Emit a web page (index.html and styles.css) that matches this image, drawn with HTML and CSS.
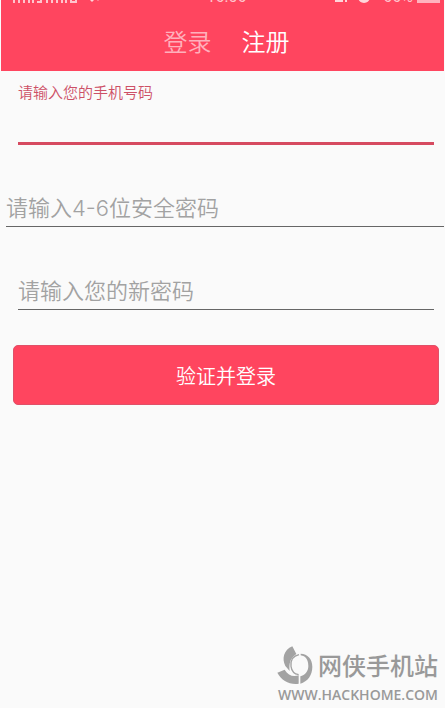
FILE: index.html
```html
<!DOCTYPE html>
<html lang="zh-CN">
<head>
<meta charset="utf-8">
<meta name="viewport" content="width=device-width, initial-scale=1">
<title>注册</title>
<link rel="stylesheet" href="styles.css">
</head>
<body>
<div class="page">
  <header class="header">
    <div class="status">
      <div class="status-side">
        <svg class="signal" width="66" height="12" viewBox="0 0 66 12" aria-hidden="true">
          <path d="M1 9v3M6 7v5M11 5v7M16 3v9M20 1v11M24 11h4M28 5v7M34 9v3M39 7v5M44 5v7M49 3v9M53 1v11M58 5v6h5V5M58 8h5"/>
        </svg>
        <svg class="wifi" width="14" height="12" viewBox="0 0 14 12" aria-hidden="true">
          <path d="M1 7l4 4 3-3zM9 7h4l-2 3z"/>
        </svg>
      </div>
      <span class="status-text">16:06</span>
      <div class="status-side status-end">
        <svg class="indicators" width="38" height="12" viewBox="0 0 38 12" aria-hidden="true">
          <path d="M2 11V8h2V2h6v9zM12 11V4h2v7z"/><circle cx="31" cy="6" r="6"/>
        </svg>
        <span class="status-text">66%</span>
        <span class="battery"></span>
      </div>
    </div>
    <nav class="tabs">
      <a class="tab" href="#login">登录</a>
      <a class="tab tab-active" href="#register" aria-current="page">注册</a>
    </nav>
  </header>
  <main class="main">
    <form class="form">
      <div class="field field-phone">
        <label class="label" for="phone">请输入您的手机号码</label>
        <input class="input" id="phone" type="tel">
      </div>
      <div class="field field-code">
        <input class="input" id="code" type="text" placeholder="请输入4-6位安全密码" aria-label="请输入4-6位安全密码">
      </div>
      <div class="field field-password">
        <input class="input" id="password" type="text" placeholder="请输入您的新密码" aria-label="请输入您的新密码">
      </div>
      <button class="submit" type="submit">验证并登录</button>
    </form>
  </main>
  <footer class="brand">
    <div class="brand-row">
      <svg class="brand-logo" width="36" height="38" viewBox="0 0 108 114" aria-hidden="true">
        <path d="M46 1C20 12 14 38 25 60L38 75C36 54 38 38 58 24Z"/>
        <path d="M1 80L23 71C33 88 48 94 65 88V113C38 117 14 104 1 80Z"/>
        <path d="M71 23C92 24 106 38 106 62C106 88 92 106 70 113V91C84 87 94 76 94 60C94 41 86 30 71 28Z"/>
        <path class="brand-arc" d="M66 26C48 30 40 44 42 61C44 76 53 84 65 86"/>
      </svg>
      <span class="brand-name">网侠手机站</span>
    </div>
    <span class="brand-url">WWW.HACKHOME.COM</span>
  </footer>
</div>
</body>
</html>
```
FILE: styles.css
```css
* {
  box-sizing: border-box;
}

body {
  margin: 0;
  background: #fafafa;
  font-family: "Noto Sans CJK SC", sans-serif;
  font-weight: 350;
}

.page {
  display: flex;
  flex-direction: column;
  min-height: 100vh;
  padding: 0 1px;
}

.header {
  background: #ff455f;
  color: #fff;
}

.status {
  display: flex;
  align-items: flex-end;
  height: 3px;
  padding: 0 4px 0 12px;
  overflow: hidden;
  color: #ffc4cc;
}

.status-side {
  display: flex;
  flex: 1;
  align-items: flex-end;
  gap: 8px;
}

.status-end {
  justify-content: flex-end;
  gap: 4px;
}

.status-text {
  font-family: Roboto, sans-serif;
  font-size: 16px;
  font-weight: 400;
  line-height: 12px;
}

.signal {
  fill: none;
  stroke: #ffc4cc;
  stroke-width: 2;
}

.wifi,
.indicators {
  fill: #ffd5da;
}

.indicators {
  margin-right: 8px;
}

.battery {
  width: 23px;
  height: 12px;
  background: #ffb3be;
}

.tabs {
  display: flex;
  justify-content: center;
  gap: 30px;
  padding: 20px 0 12px;
  margin-left: 8px;
}

.tab {
  color: #ffb0bc;
  font-size: 24px;
  line-height: 36px;
  text-decoration: none;
}

.tab-active {
  color: #fff;
}

.form {
  display: flex;
  flex-direction: column;
}

.field {
  display: flex;
  flex-direction: column;
  margin: 0 10px 0 17px;
}

.field-phone {
  padding-top: 9px;
}

.label {
  color: #cd5066;
  font-size: 15px;
  line-height: 24px;
}

.input {
  width: 100%;
  height: 41px;
  padding: 4px 0 0;
  border: 0;
  border-bottom: 1px solid #666;
  border-radius: 0;
  outline: 0;
  background: transparent;
  color: #333;
  font-family: Inter, "Noto Sans CJK SC", sans-serif;
  font-size: 22px;
  font-weight: 350;
}

.input::placeholder {
  color: #a2a2a2;
  opacity: 1;
}

.field-phone .input {
  border-bottom: 3px solid #d64a60;
}

.field-code {
  margin: 41px 0 0 5px;
}

.field-password {
  margin-top: 42px;
}

.submit {
  height: 60px;
  margin: 35px 5px 0 12px;
  border: 1px solid #e05068;
  border-radius: 5px;
  background: #ff455f;
  color: #fff;
  font: inherit;
  font-size: 20px;
}

.brand {
  display: flex;
  flex-direction: column;
  align-items: flex-end;
  margin-top: auto;
  padding: 0 6px 2px 0;
  color: #999;
}

.brand-row {
  display: flex;
  align-items: center;
  gap: 5px;
}

.brand-logo {
  fill: #a3a3a3;
}

.brand-arc {
  fill: none;
  stroke: #a3a3a3;
  stroke-width: 4;
}

.brand-name {
  font-size: 24px;
  font-weight: 500;
  line-height: 36px;
}

.brand-url {
  font-family: "Open Sans", sans-serif;
  font-size: 14px;
  font-weight: 600;
  line-height: 22px;
}
```
